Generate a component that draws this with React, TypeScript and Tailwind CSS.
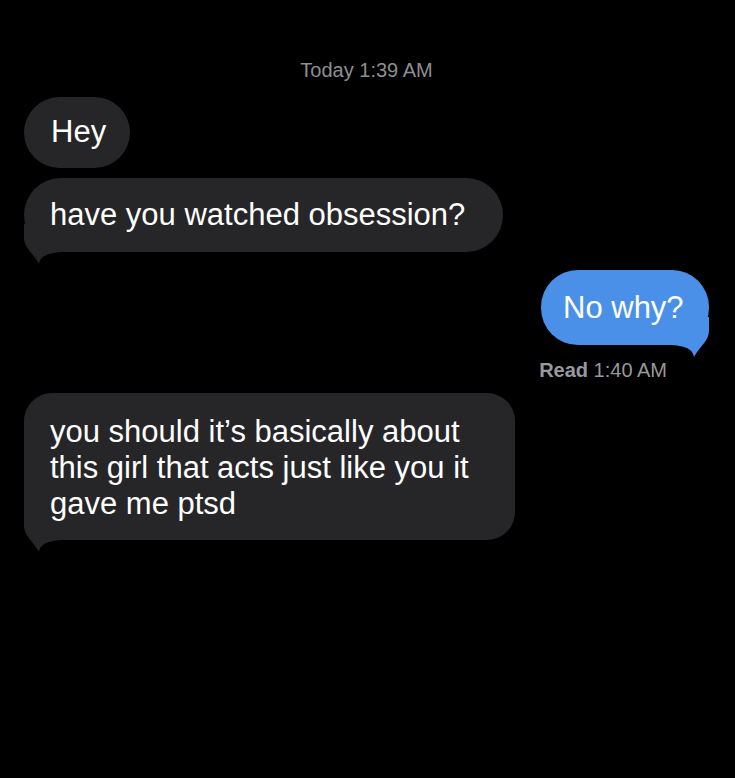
type Side = "left" | "right";

function Tail({ side, color }: { side: Side; color: string }) {
  return (
    <svg
      viewBox="0 0 40 42"
      className={
        side === "left"
          ? "absolute left-0 bottom-[-14px] h-[42px] w-[40px]"
          : "absolute right-0 bottom-[-14px] h-[42px] w-[40px] -scale-x-100"
      }
    >
      <path
        d="M0 0 L0 14 C0 24 10 30 15 40 C16 34 20 29 38 28 L40 28 L40 0 Z"
        fill={color}
      />
    </svg>
  );
}

export default function App() {
  return (
    <main
      className="min-h-screen bg-black text-white"
      style={{ fontFamily: '"Liberation Sans", Arial, sans-serif' }}
    >
      <div className="flex flex-col pl-6 pr-[26px] pt-[58px]">
        <div className="text-center text-[20px] leading-[24px] text-[#8e8e93]">
          Today 1:39 AM
        </div>

        <div className="mt-[15px] w-[106px] rounded-[36px] bg-[#262628] pl-[27px] pt-[17px] pb-[18px] text-[31px] leading-[36px]">
          Hey
        </div>

        <div className="relative mt-[10px] w-[479px] rounded-[37px] bg-[#262628] pl-[26px] py-[19px] text-[31px] leading-[36px]">
          <Tail side="left" color="#262628" />
          <span className="relative">have you watched obsession?</span>
        </div>

        <div className="relative mt-[18px] ml-auto w-[168px] rounded-[37px] bg-[#4a90e8] pl-[22px] pt-[20px] pb-[19px] text-[31px] leading-[36px]">
          <Tail side="right" color="#4a90e8" />
          <span className="relative">No why?</span>
        </div>

        <div className="mt-[13px] mr-[42px] self-end text-[20px] leading-[24px] text-[#98989d]">
          <span className="font-bold">Read</span> 1:40 AM
        </div>

        <div className="relative mt-[11px] w-[491px] rounded-[28px] bg-[#262628] pl-[26px] pr-[20px] pt-[21px] pb-[18px] text-[31px] leading-[36px]">
          <Tail side="left" color="#262628" />
          <span className="relative">
            you should it’s basically about this girl that acts just like you it
            gave me ptsd
          </span>
        </div>
      </div>
    </main>
  );
}
